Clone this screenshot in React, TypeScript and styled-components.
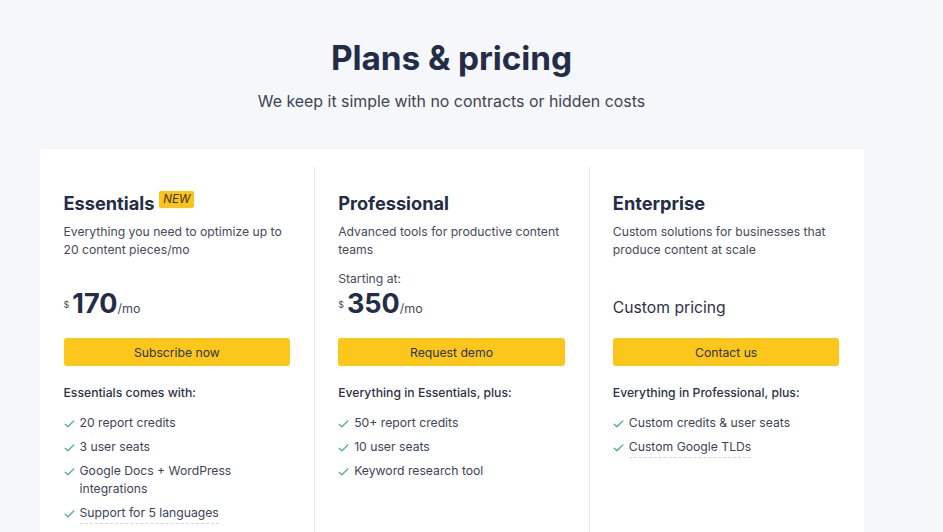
import styled, { createGlobalStyle } from 'styled-components';

const GlobalStyle = createGlobalStyle`
  body {
    margin: 0;
    background: #f6f7fb;
    font-family: 'Inter', 'Liberation Sans', sans-serif;
    color: #2d3346;
  }
`;

type Plan = {
  name: string;
  badge?: string;
  desc: string;
  starting?: string;
  price?: string;
  custom?: string;
  cta: string;
  listTitle: string;
  items: { text: string; dashed?: boolean }[];
};

const PLANS: Plan[] = [
  {
    name: 'Essentials',
    badge: 'NEW',
    desc: 'Everything you need to optimize up to 20 content pieces/mo',
    price: '170',
    cta: 'Subscribe now',
    listTitle: 'Essentials comes with:',
    items: [
      { text: '20 report credits' },
      { text: '3 user seats' },
      { text: 'Google Docs + WordPress integrations' },
      { text: 'Support for 5 languages', dashed: true },
    ],
  },
  {
    name: 'Professional',
    desc: 'Advanced tools for productive content teams',
    starting: 'Starting at:',
    price: '350',
    cta: 'Request demo',
    listTitle: 'Everything in Essentials, plus:',
    items: [
      { text: '50+ report credits' },
      { text: '10 user seats' },
      { text: 'Keyword research tool' },
    ],
  },
  {
    name: 'Enterprise',
    desc: 'Custom solutions for businesses that produce content at scale',
    custom: 'Custom pricing',
    cta: 'Contact us',
    listTitle: 'Everything in Professional, plus:',
    items: [
      { text: 'Custom credits & user seats' },
      { text: 'Custom Google TLDs', dashed: true },
    ],
  },
];

export default function App() {
  return (
    <>
      <GlobalStyle />
      <Page>
        <Wrap>
          <Title>Plans &amp; pricing</Title>
          <Subtitle>We keep it simple with no contracts or hidden costs</Subtitle>
          <Card>
            {PLANS.map((plan, i) => (
              <Column key={plan.name} $first={i === 0}>
                <NameRow>
                  <Name>{plan.name}</Name>
                  {plan.badge && <Badge>{plan.badge}</Badge>}
                </NameRow>
                <Desc>{plan.desc}</Desc>
                <PriceArea>
                  {plan.starting && <Starting>{plan.starting}</Starting>}
                  {plan.price && (
                    <Price>
                      <Dollar>$</Dollar>
                      <Amount>{plan.price}</Amount>
                      <Per>/mo</Per>
                    </Price>
                  )}
                  {plan.custom && <Custom>{plan.custom}</Custom>}
                </PriceArea>
                <Button>{plan.cta}</Button>
                <ListTitle>{plan.listTitle}</ListTitle>
                <List>
                  {plan.items.map((item) => (
                    <Item key={item.text}>
                      <Check viewBox="0 0 12 9" aria-hidden>
                        <path d="M1 4.6 L4.2 7.6 L11 1" />
                      </Check>
                      <ItemText $dashed={item.dashed}>{item.text}</ItemText>
                    </Item>
                  ))}
                </List>
              </Column>
            ))}
          </Card>
        </Wrap>
      </Page>
    </>
  );
}

const Page = styled.div`
  padding: 38px 40px 0 0;
  height: 100vh;
  overflow: hidden;
  box-sizing: border-box;
`;

const Wrap = styled.div`
  width: 824px;
  margin: 0 auto;
  display: flex;
  flex-direction: column;
  align-items: center;
`;

const Title = styled.h1`
  margin: 0;
  font-size: 33.4px;
  line-height: 40px;
  font-weight: 700;
  color: #232c48;
  letter-spacing: -0.1px;
`;

const Subtitle = styled.p`
  margin: 12px 0 0;
  font-size: 15.9px;
  line-height: 24px;
  color: #3d4456;
`;

const Card = styled.div`
  margin-top: 35px;
  width: 100%;
  background: #fff;
  padding-top: 18px;
  display: grid;
  grid-template-columns: repeat(3, 1fr);
  height: 400px;
  box-sizing: border-box;
`;

const Column = styled.div<{ $first?: boolean }>`
  padding: 24px 24px 0 ${(p) => (p.$first ? '24px' : '23px')};
  border-left: ${(p) => (p.$first ? 'none' : '1px solid #e6e8ee')};
  display: flex;
  flex-direction: column;
`;

const NameRow = styled.div`
  display: flex;
  align-items: center;
  gap: 5px;
  height: 24px;
`;

const Name = styled.h2`
  margin: 0;
  font-size: 18.2px;
  line-height: 24px;
  font-weight: 700;
  color: #232c48;
`;

const Badge = styled.span`
  background: #fcc419;
  color: #3a3320;
  font-size: 11.5px;
  font-style: italic;
  line-height: 17px;
  padding: 0 4px;
  border-radius: 2px;
  margin-top: -8px;
`;

const Desc = styled.p`
  margin: 8px 0 0;
  font-size: 12.2px;
  line-height: 18px;
  color: #454b5a;
  min-height: 36px;
`;

const PriceArea = styled.div`
  margin-top: 11px;
  height: 50px;
  display: flex;
  flex-direction: column;
  justify-content: flex-end;
`;

const Starting = styled.div`
  font-size: 12.2px;
  line-height: 18px;
  color: #454b5a;
`;

const Price = styled.div`
  display: flex;
  align-items: baseline;
  height: 32px;
`;

const Dollar = styled.span`
  font-size: 9px;
  color: #454b5a;
  margin-right: 3px;
  align-self: center;
`;

const Amount = styled.span`
  font-size: 27px;
  line-height: 32px;
  font-weight: 700;
  color: #232c48;
`;

const Per = styled.span`
  font-size: 12.5px;
  color: #454b5a;
`;

const Custom = styled.div`
  font-size: 15.7px;
  line-height: 24px;
  color: #2d3346;
`;

const Button = styled.button`
  margin-top: 18px;
  height: 28px;
  border: none;
  border-radius: 3px;
  background: #fdc61b;
  color: #2d3346;
  font-family: inherit;
  font-size: 12.2px;
  cursor: pointer;
`;

const ListTitle = styled.div`
  margin-top: 18px;
  font-size: 12.2px;
  line-height: 18px;
  font-weight: 500;
  color: #2d3346;
`;

const List = styled.ul`
  list-style: none;
  margin: 12px 0 0;
  padding: 0;
  display: flex;
  flex-direction: column;
  gap: 6px;
`;

const Item = styled.li`
  display: flex;
  align-items: flex-start;
  gap: 5px;
  font-size: 12.2px;
  line-height: 18px;
  color: #3d4456;
`;

const Check = styled.svg`
  width: 11px;
  height: 8px;
  flex-shrink: 0;
  margin-top: 6px;
  fill: none;
  stroke: #3fae8c;
  stroke-width: 1.4;
  stroke-linecap: round;
  stroke-linejoin: round;
`;

const ItemText = styled.span<{ $dashed?: boolean }>`
  padding-bottom: ${(p) => (p.$dashed ? '1px' : '0')};
  border-bottom: ${(p) => (p.$dashed ? '1px dashed #d4d7de' : 'none')};
  max-width: 165px;
`;
